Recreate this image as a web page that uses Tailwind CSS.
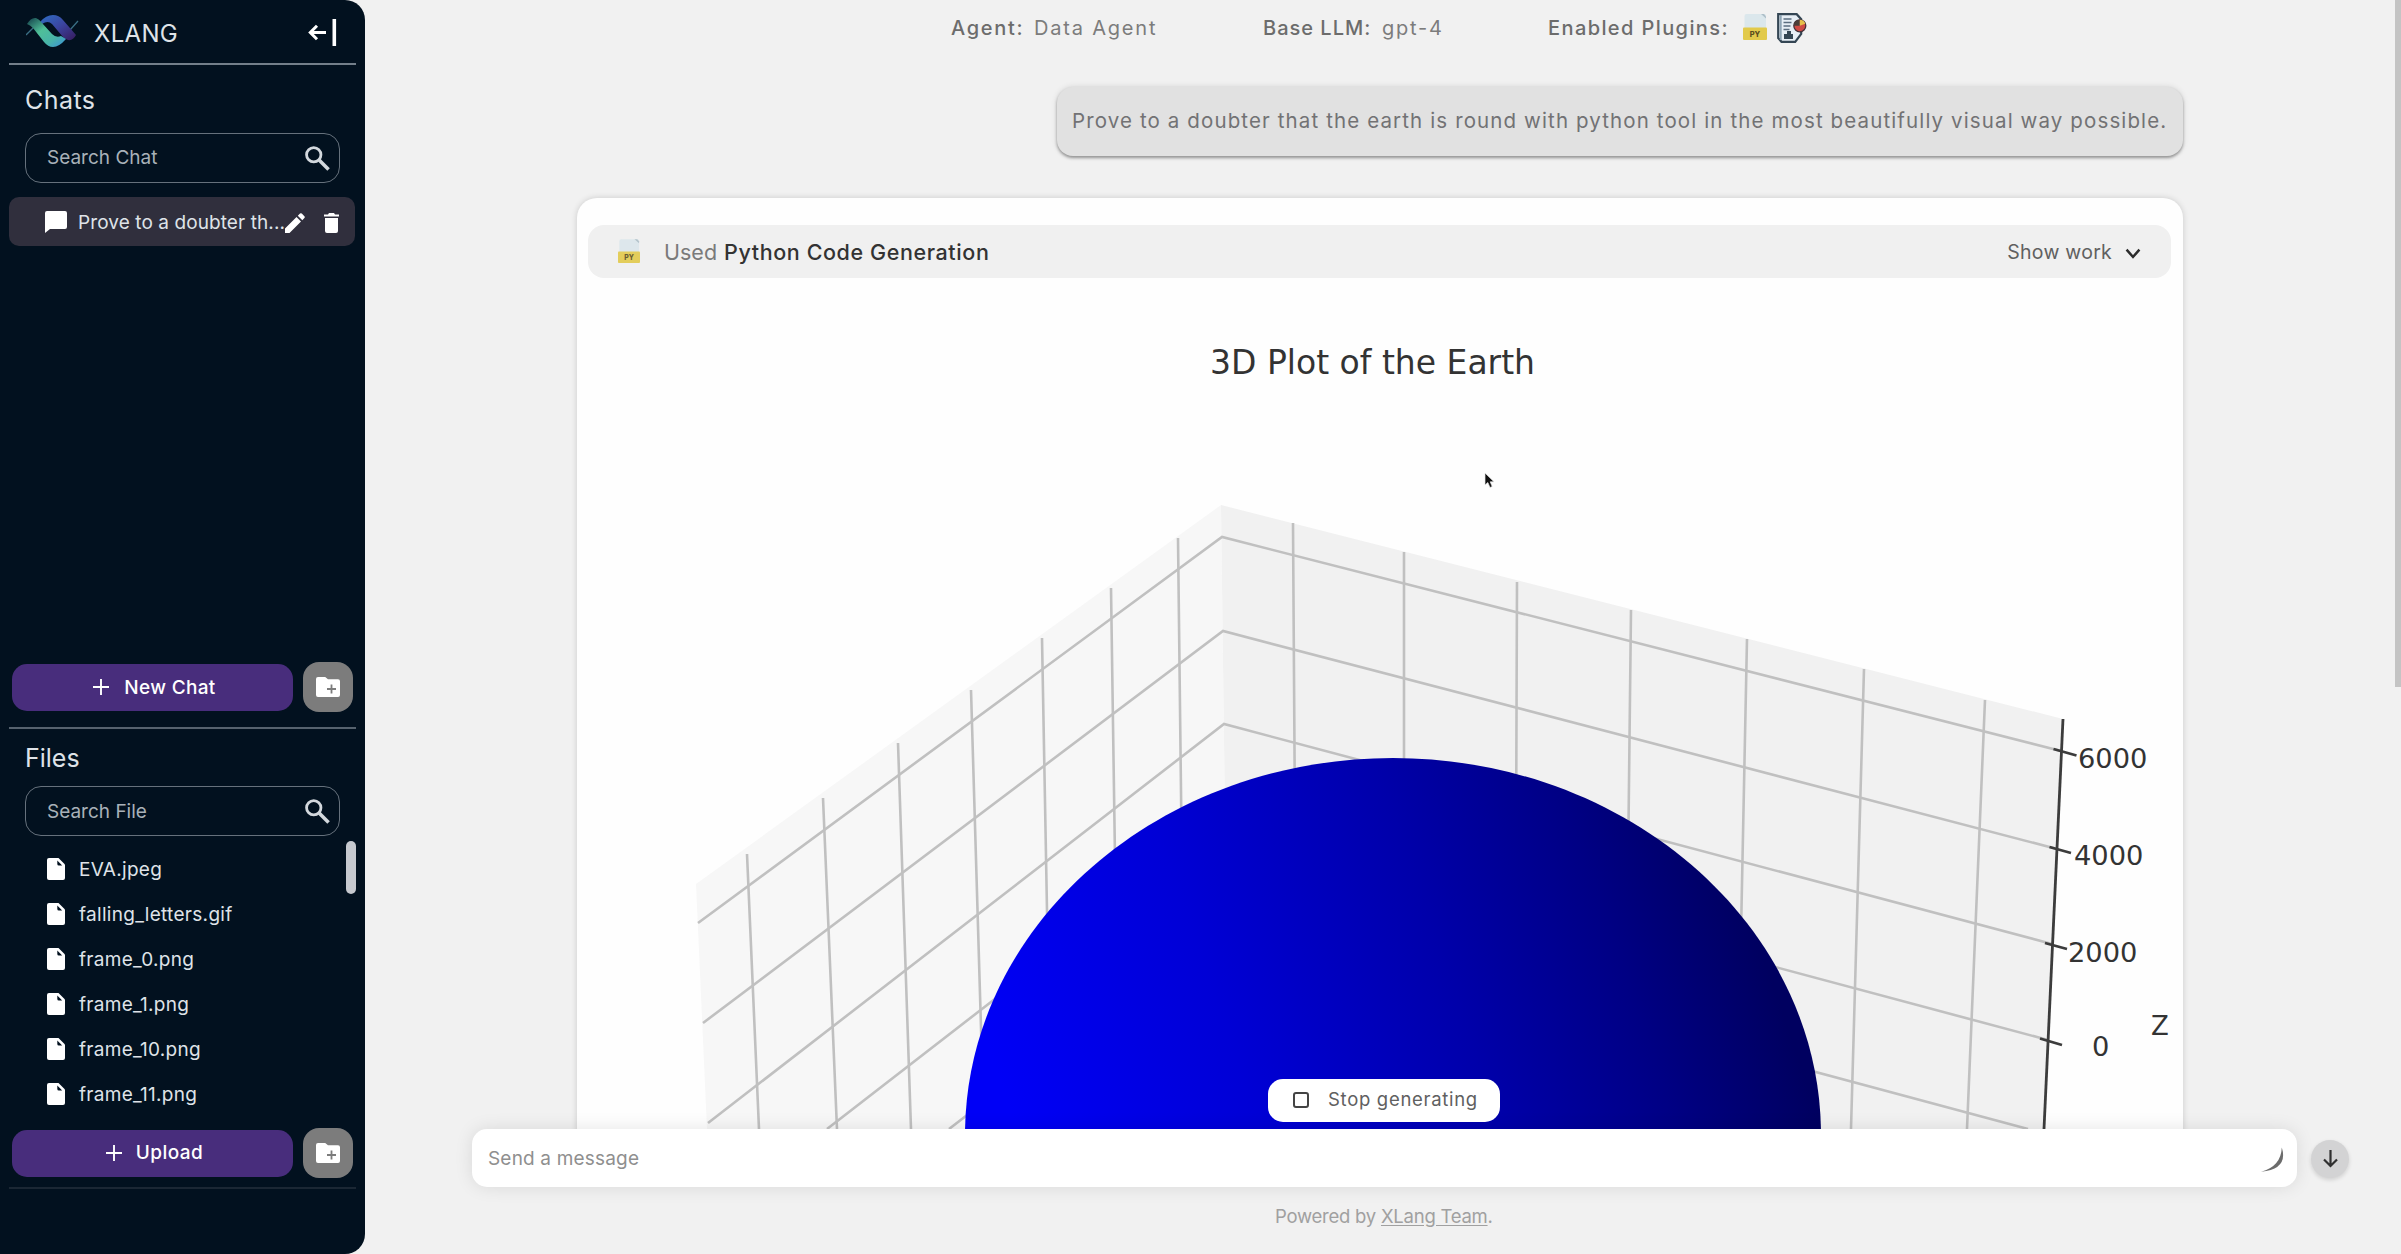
<!DOCTYPE html>
<html lang="en">
<head>
<meta charset="utf-8">
<title>XLANG</title>
<script src="https://cdn.jsdelivr.net/npm/@tailwindcss/browser@4"></script>
</head>
<body class="h-[1254px] w-[2401px] overflow-hidden bg-[#f1f1f1] font-['Inter','Liberation_Sans',sans-serif]">
<svg class="hidden">
  <symbol id="search" viewBox="0 0 24 24"><g fill="none" stroke="currentColor" stroke-width="2.7"><circle cx="8.4" cy="8.4" r="6.9"/><path d="M13.3 13.3 22.6 22.6" stroke-width="3.4"/></g></symbol>
  <symbol id="file" viewBox="0 0 18 22"><path fill="currentColor" d="M2 0h9.5L18 6.5V20a2 2 0 0 1-2 2H2a2 2 0 0 1-2-2V2a2 2 0 0 1 2-2z"/><path fill="#02101e" d="M10.3 2.6 15.2 7.4h-3.400a1.5 1.5 0 0 1-1.5-1.5z"/></symbol>
  <symbol id="folder" viewBox="0 0 24 20"><path fill="#fff" d="M2 0h7.2L12 2.2h10a2 2 0 0 1 2 2V18a2 2 0 0 1-2 2H2a2 2 0 0 1-2-2V2a2 2 0 0 1 2-2z"/><path stroke="#7c7c7c" stroke-width="1.8" d="M15.5 7.5v9M11 12h9"/></symbol>
  <symbol id="plus" viewBox="0 0 16 16"><path stroke="#fff" stroke-width="1.9" d="M8 0v16M0 8h16"/></symbol>
  <symbol id="py" viewBox="0 0 24 28"><rect x="1.5" y="0" width="21.5" height="26" rx="2" fill="#dbe7ec"/><path d="M18 0h3l2 2.500v2z" fill="#aebfc8"/><rect x="0" y="13.500" width="24" height="12.500" rx="1" fill="#e2ca4b"/><text x="12" y="22.600" text-anchor="middle" font-family="Inter" font-weight="800" font-size="7.500" fill="#5b4d1e">PY</text></symbol>
</svg>
<div class="flex h-full">
  <aside class="flex w-[365px] shrink-0 flex-col rounded-r-[20px] bg-[#02111f] text-[#dfe3e8]">
    <header class="flex h-[63px] shrink-0 items-center pl-[26px] pt-1">
      <svg class="mt-[-6px] h-[32px] w-[53px]" viewBox="0 0 53 32">
        <defs>
          <linearGradient id="lg1" x1="0" y1="0" x2="1" y2="1"><stop offset="0" stop-color="#123c48"/><stop offset=".4" stop-color="#4fbf98"/><stop offset=".7" stop-color="#48b4a8"/><stop offset="1" stop-color="#3b8fdc"/></linearGradient>
          <linearGradient id="lg2" x1="0" y1="0" x2="1" y2="1"><stop offset="0" stop-color="#2f6fc4"/><stop offset=".5" stop-color="#3b449f"/><stop offset="1" stop-color="#371a5c"/></linearGradient>
        </defs>
        <path d="M0 20 8 12M44 15 52 6" stroke="#3a6f84" stroke-width="1.3"/>
        <path d="M14 7Q20 0 27 0q6 0 10 5L50 20q-3 6-8 5-3-1-5-3L26 9q-4-4-10 0z" fill="url(#lg2)"/>
        <path d="M1 9Q5 2 10 3q3 1 6 5l10 11q4 4 9 2l5 3q-7 8-13 8-5 0-9-5L7 13Q4 10 1 9z" fill="url(#lg1)"/>
      </svg>
      <span class="ml-[15px] w-[214px] text-[24px] leading-none tracking-[0.3px]">XLANG</span>
      <svg class="mt-[-3px] h-[27px] w-[29px]" viewBox="0 0 29 27"><path d="M18 13.500H2.500M9 6.800 2.300 13.500 9 20.200" fill="none" stroke="#fff" stroke-width="3"/><path d="M26.300 0v27" stroke="#fff" stroke-width="3.600"/></svg>
    </header>
    <div class="mx-[9px] h-[2px] shrink-0 bg-[#737f8a]"></div>
    <h2 class="mt-[20px] h-[30px] pl-[25px] text-[25px] leading-[30px] tracking-[0.45px]">Chats</h2>
    <div class="mx-[25px] mt-[18px] flex h-[50px] shrink-0 items-center justify-between rounded-[16px] border-[1.5px] border-[#66717c] pl-[21px] pr-[9px] text-[19px]">
      <span class="pt-[1px] text-[#a9b1b9]">Search Chat</span>
      <svg class="h-[25px] w-[25px] text-[#d3d8dd]"><use href="#search"/></svg>
    </div>
    <div class="ml-[9px] mr-[10px] mt-[14px] flex h-[49px] shrink-0 items-center rounded-[10px] bg-[#302f3d] pl-[36px] text-[19px]">
      <svg class="h-[22px] w-[22px]" viewBox="0 0 22 22"><path fill="#fff" d="M2 0h18a2 2 0 0 1 2 2v14a2 2 0 0 1-2 2H5l-5 4V2a2 2 0 0 1 2-2z"/></svg>
      <span class="ml-[11px] w-[207px] whitespace-nowrap pt-[3px] tracking-[0.09px]">Prove to a doubter th...</span>
      <svg class="mt-[2px] h-[20px] w-[20px]" viewBox="0 0 20 20"><path fill="#fff" d="M0 20v-4.500L11.500 4 16 8.500 4.500 20zM12.800 2.700 15 .6a1.300 1.300 0 0 1 1.800 0l2.600 2.600a1.300 1.300 0 0 1 0 1.800l-2.100 2.200z"/></svg>
      <svg class="ml-[19px] mt-[3px] h-[20px] w-[15px]" viewBox="0 0 15 20"><path fill="#fff" d="M1 5h13v13a2 2 0 0 1-2 2H3a2 2 0 0 1-2-2zM0 1.400h4L5 0h5l1 1.400h4v2H0z"/></svg>
    </div>
    <div class="mb-[15px] mt-[416px] flex h-[50px] shrink-0 items-center pl-[12px]">
      <button class="flex h-[47px] w-[281px] items-center justify-center gap-[15px] rounded-[15px] bg-[#482d7c] pl-[4px] text-[19px] font-medium tracking-[0.33px] text-white"><svg class="h-[16px] w-[16px]"><use href="#plus"/></svg><span class="pt-[2px]">New Chat</span></button>
      <button class="ml-[10px] grid size-[50px] place-items-center rounded-[16px] bg-[#7c7c7c]"><svg class="h-[20px] w-[24px]"><use href="#folder"/></svg></button>
    </div>
    <div class="mx-[9px] h-[2px] shrink-0 bg-[#56626e]"></div>
    <h2 class="mt-[14px] h-[30px] pl-[25px] text-[25px] leading-[30px]">Files</h2>
    <div class="mx-[25px] mt-[13px] flex h-[50px] shrink-0 items-center justify-between rounded-[16px] border-[1.5px] border-[#66717c] pl-[21px] pr-[9px] text-[19px]">
      <span class="pt-[2px] text-[#a9b1b9]">Search File</span>
      <svg class="h-[25px] w-[25px] text-[#d3d8dd]"><use href="#search"/></svg>
    </div>
    <div class="flex h-[292px] shrink-0 justify-between pr-[9px] pt-[5px]">
      <ul class="pl-[47px] pt-[6px] text-[19px] tracking-[0.3px] [&>li]:flex [&>li]:h-[45px] [&>li]:items-center [&>li]:gap-[14px] [&>li]:pt-[2px] [&_svg]:mt-[-3px] [&_svg]:h-[22px] [&_svg]:w-[18px] [&_svg]:text-white">
        <li><svg><use href="#file"/></svg>EVA.jpeg</li>
        <li><svg><use href="#file"/></svg>falling_letters.gif</li>
        <li><svg><use href="#file"/></svg>frame_0.png</li>
        <li><svg><use href="#file"/></svg>frame_1.png</li>
        <li><svg><use href="#file"/></svg>frame_10.png</li>
        <li><svg><use href="#file"/></svg>frame_11.png</li>
      </ul>
      <div class="h-[53px] w-[10px] rounded-full bg-[#c6c9cf]"></div>
    </div>
    <div class="mb-[9px] flex h-[50px] shrink-0 items-center pl-[12px]">
      <button class="flex h-[47px] w-[281px] items-center justify-center gap-[14px] rounded-[15px] bg-[#482d7c] pl-[4px] text-[19px] font-medium tracking-[0.44px] text-white"><svg class="h-[16px] w-[16px]"><use href="#plus"/></svg><span class="pt-[1px]">Upload</span></button>
      <button class="ml-[10px] grid size-[50px] place-items-center rounded-[16px] bg-[#7c7c7c]"><svg class="h-[20px] w-[24px]"><use href="#folder"/></svg></button>
    </div>
    <div class="mx-[9px] h-[2px] shrink-0 bg-[#1b2734]"></div>
  </aside>

  <main class="relative flex min-w-0 flex-1 flex-col">
    <div class="absolute right-0 top-0 h-[687px] w-[6px] bg-[#c4c4c4]"></div>
    <section class="h-[1129px] overflow-hidden">
      <div class="flex h-[56px] items-center whitespace-nowrap pl-[586px] text-[20px] text-[#7c7c7c]">
        <b class="w-[83px] font-medium tracking-[1.7px] text-[#6c6c6c]">Agent:</b>
        <span class="w-[229px] tracking-[1.8px]">Data Agent</span>
        <b class="w-[119px] font-medium tracking-[1px] text-[#6c6c6c]">Base LLM:</b>
        <span class="w-[166px] tracking-[1.8px]">gpt-4</span>
        <b class="w-[195px] font-medium tracking-[1.4px] text-[#6c6c6c]">Enabled Plugins:</b>
        <svg class="h-[28px] w-[24px]"><use href="#py"/></svg>
        <svg class="ml-[10px] h-[30px] w-[30px]" viewBox="0 0 30 30">
          <path d="M1.200 1.200h18.500l4.500 5V21l-6 7.800H4.500L1.200 25z" fill="#e6eef5" stroke="#344654" stroke-width="2.200"/>
          <path d="M3.700 2v25" stroke="#8fa5b5" stroke-width="2"/>
          <path d="M6.500 6h8M6.500 9.500h8M6.500 13h7M6.500 16.500h6" stroke="#5b6e80" stroke-width="1.500"/>
          <path d="M7 26v-5h3v-3h4v3h2v5z" fill="#344654"/>
          <circle cx="22.800" cy="12.800" r="6" fill="#cf4b45" stroke="#443038" stroke-width="1.300"/>
          <path d="M22.800 12.800V6.800a6 6 0 0 0-6 6z" fill="#4a3f3a"/><path d="M22.800 12.800V6.800a6 6 0 0 1 5.600 4z" fill="#e6c04a"/>
        </svg>
      </div>
      <div class="flex justify-end pr-[218px] pt-[31px]">
        <div class="flex h-[69px] w-[1126px] items-center whitespace-nowrap rounded-[16px] bg-[#e1e1e1] pl-[15px] text-[20.5px] tracking-[1.12px] text-[#727274] shadow-[0_2px_3px_rgba(0,0,0,0.35),0_0_6px_rgba(0,0,0,0.12)]">Prove to a doubter that the earth is round with python tool in the most beautifully visual way possible.</div>
      </div>
      <article class="ml-[212px] mt-[42px] h-[1100px] w-[1606px] rounded-[20px] bg-[#fefefe] pt-[27px] shadow-[0_0_6px_rgba(0,0,0,0.16)]">
        <div class="ml-[11px] mr-[12px] flex h-[53px] items-center rounded-[16px] bg-[#f0f0f0] pl-[30px] pr-[30px] text-[21.5px]">
          <svg class="h-[26px] w-[22px] opacity-90"><use href="#py"/></svg>
          <span class="ml-[24px] pt-[2px] text-[#7a7a7a]">Used</span>
          <span class="ml-[7px] pt-[2px] font-medium tracking-[0.6px] text-[#333]">Python Code Generation</span>
          <span class="ml-auto pt-[3px] text-[19.5px] tracking-[0.25px] text-[#606060]">Show work</span>
          <svg class="ml-[13px] mt-[4px] h-[11px] w-[16px]" viewBox="0 0 17 12"><path d="M1.500 1.800 8.500 9.800 15.500 1.800" fill="none" stroke="#2c2c2c" stroke-width="2.700"/></svg>
        </div>
        <!-- 3D axes with shaded sphere -->
        <svg class="block h-[851px] w-[1606px]" viewBox="577 278 1606 851" font-family="DejaVu Sans" fill="#333">
          <defs>
            <linearGradient id="ball" gradientUnits="userSpaceOnUse" x1="1000" y1="1080" x2="1722" y2="834">
              <stop offset="0" stop-color="#0000f6"/><stop offset=".3" stop-color="#0000d6"/><stop offset=".6" stop-color="#0000aa"/><stop offset=".82" stop-color="#000084"/><stop offset="1" stop-color="#000060"/>
            </linearGradient>
          </defs>
          <text x="1210" y="374" font-size="33">3D Plot of the Earth</text>
          <path d="M1221 505 696 884 707 1129H1229z" fill="#f7f7f7"/>
          <path d="M1221 505 2063 719 2044 1129H1229z" fill="#f1f1f1"/>
          <g fill="none" stroke="#c0c0c0" stroke-width="2.600">
            <path d="M747 854 759 1129M823 798 837 1129M898 743 911 1129M971 690 984 1129M1042 638 1051 1129M1111 588 1119 1129M1178 538 1185 1129"/>
            <path d="M1293 523 1297 1129M1404 552V1129M1517 582 1515 1129M1631 610 1625 1129M1747 639 1737 1129M1864 669 1851 1129M1985 700 1967 1129"/>
            <path d="M698 923 1222 537 2061 751M703 1023 1223 631 2057 849M708 1123 1224 724 2052 944M827 1129 1226 820 2048 1040M949 1129 1228 914 2028 1129"/>
          </g>
          <path d="M965 1135C965 926 1158 758 1393 758S1821 926 1821 1135z" fill="url(#ball)"/>
          <path d="M2063 719 2044 1129" stroke="#3c3c3c" stroke-width="2.800"/>
          <path d="M2053.500 749 2076.500 755.500M2049.500 847 2071 853M2045 943 2067 949M2040 1038.500 2062 1045" stroke="#3c3c3c" stroke-width="2.800"/>
          <g font-size="27.300">
            <text x="2078" y="768">6000</text><text x="2074" y="865">4000</text><text x="2068" y="961.500">2000</text><text x="2092" y="1056">0</text><text x="2151" y="1034.500" font-size="26">Z</text>
          </g>
        </svg>
      </article>
    </section>

    <footer class="relative flex-1">
      <div class="flex items-center">
        <div class="ml-[107px] flex h-[58px] w-[1825px] items-center justify-between rounded-[15px] bg-white pl-[16px] pr-[12px] text-[19px] tracking-[0.18px] text-[#8f8f8f] shadow-[0_0_18px_rgba(0,0,0,0.10)]"><span class="pt-[2px]">Send a message</span>
          <svg class="mt-[2px] h-[28px] w-[26px]" viewBox="0 0 26 28"><path d="M22.800 2.500Q29.500 24 2 26.800 22 21.500 22.800 2.500z" fill="#6c6c6c"/></svg>
        </div>
        <div class="ml-[14px] mt-[2px] grid size-[38px] place-items-center rounded-full bg-[#d3d3d4] shadow-[0_2px_4px_rgba(0,0,0,0.14)]">
          <svg class="h-[18px] w-[15px]" viewBox="0 0 15 18"><path d="M7.500 0v15.500M1 9.500 7.500 16 14 9.500" fill="none" stroke="#303030" stroke-width="2.200"/></svg>
        </div>
      </div>
      <p class="mt-[18px] pl-[910px] text-[18.5px] leading-[22px] tracking-[-0.24px] text-[#a0a0a0]">Powered by <a class="underline underline-offset-2">XLang Team</a>.</p>
    </footer>

    <button class="absolute left-[903px] top-[1079px] flex h-[43px] w-[232px] items-center whitespace-nowrap rounded-[15px] bg-white pl-[25px] text-[18.5px] tracking-[0.7px] text-[#606060]">
      <span class="mr-[19px] mt-[-2px] size-[16px] shrink-0 rounded-[3px] border-2 border-[#444]"></span><span class="mt-[-2px]">Stop generating</span>
    </button>
    <svg class="absolute left-[1119px] top-[472px] h-[18px] w-[12px]" viewBox="0 0 12 18"><path d="M1 1v12l2.800-2.500L6 15.500l2.200-1L6.200 9.800H10z" fill="#111" stroke="#e8e8e8" stroke-width=".7"/></svg>
  </main>
</div>
</body>
</html>
